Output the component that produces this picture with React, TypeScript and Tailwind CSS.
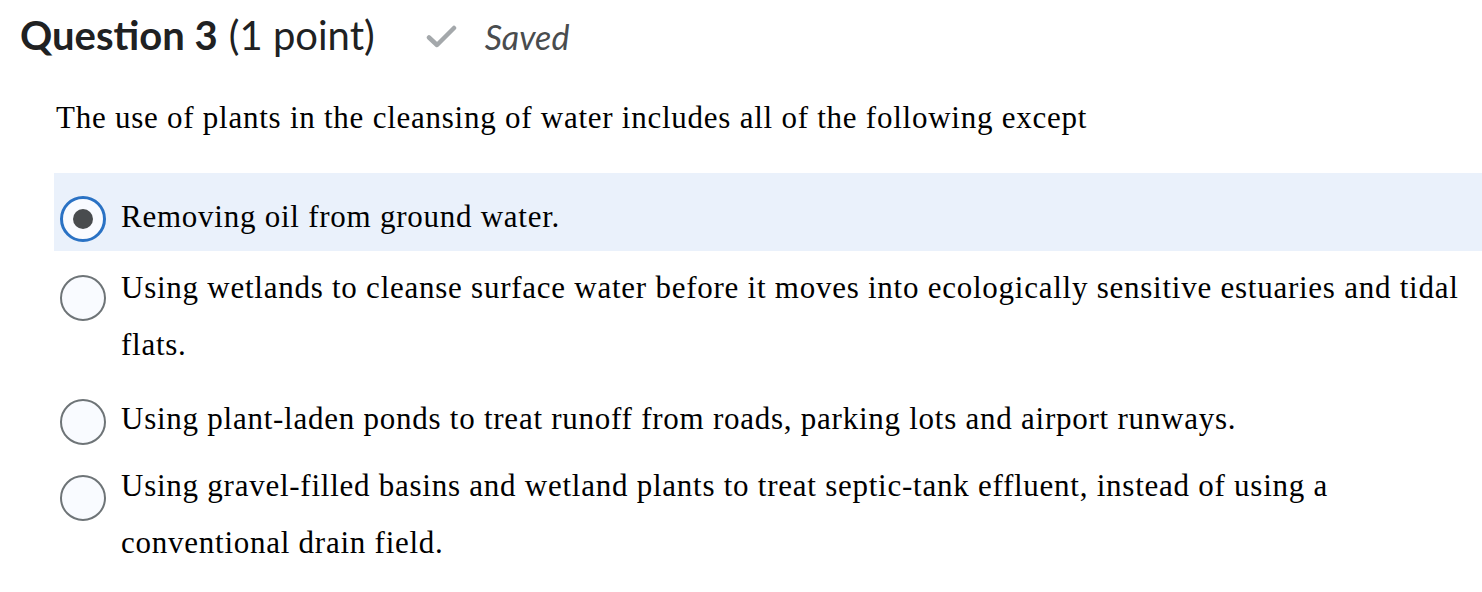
import React from "react";

const serif = { fontFamily: '"Liberation Serif", "Times New Roman", serif', letterSpacing: "0.75px" };

function Radio({ checked }: { checked?: boolean }) {
  if (checked) {
    return (
      <div className="w-[46px] h-[46px] shrink-0 rounded-full border-[3px] border-[#2a72c4] bg-[#f9fbff] flex items-center justify-center">
        <div className="w-[20px] h-[20px] rounded-full bg-[#494c4e]" />
      </div>
    );
  }
  return <div className="w-[46px] h-[46px] shrink-0 rounded-full border-2 border-[#6e7477] bg-[#f9fbff]" />;
}

export default function App() {
  return (
    <div className="w-[1482px] h-[592px] bg-white overflow-hidden">
      <div className="pt-[15px] pl-[20px] flex items-baseline font-['Lato',sans-serif] leading-[40px]">
        <span className="text-[40px] font-bold text-[#202122]">Question 3</span>
        <span className="text-[40px] text-[#202122] ml-[11px]">(1 point)</span>
        <svg className="ml-[51px] self-center mt-[2px]" width="32" height="24" viewBox="0 0 32 24">
          <path d="M3 12.5 L11 20 L28 3" fill="none" stroke="#a4a8ab" strokeWidth="4.5" strokeLinecap="round" strokeLinejoin="round" />
        </svg>
        <span className="ml-[27px] text-[34px] italic text-[#494c4e]">Saved</span>
      </div>
      <p className="ml-[56px] mt-[32px] text-[31px] leading-[57px] text-black" style={serif}>
        The use of plants in the cleansing of water includes all of the following except
      </p>
      <div className="ml-[54px] mt-[27px] text-[31px] leading-[57px] text-black" style={serif}>
        <div className="flex bg-[#eaf1fb] pl-[6px] pt-[15px] pb-[6px]">
          <div className="mt-[8px]">
            <Radio checked />
          </div>
          <div className="ml-[15px]">Removing oil from ground water.</div>
        </div>
        <div className="flex pl-[6px] pt-[8px]">
          <div className="mt-[16px]">
            <Radio />
          </div>
          <div className="ml-[15px]">
            Using wetlands to cleanse surface water before it moves into ecologically sensitive estuaries and tidal flats.
          </div>
        </div>
        <div className="flex pl-[6px] pt-[17px]">
          <div className="mt-[9px]">
            <Radio />
          </div>
          <div className="ml-[15px]">
            Using plant-laden ponds to treat runoff from roads, parking lots and airport runways.
          </div>
        </div>
        <div className="flex pl-[6px] pt-[10px]">
          <div className="mt-[18px]">
            <Radio />
          </div>
          <div className="ml-[15px]">
            Using gravel-filled basins and wetland plants to treat septic-tank effluent, instead of using a conventional drain field.
          </div>
        </div>
      </div>
    </div>
  );
}
